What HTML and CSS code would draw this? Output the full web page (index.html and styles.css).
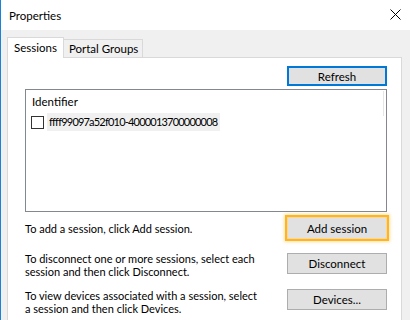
FILE: index.html
```html
<!DOCTYPE html>
<html lang="en">
<head>
  <meta charset="UTF-8" />
  <title>Properties</title>
  <link rel="stylesheet" href="styles.css">
</head>
<body>
  <div class="window">
    <div class="titlebar">
      <span class="title">Properties</span>
      <svg class="close" width="11" height="11" viewBox="0 0 11 11">
        <path d="M0.5 0.5 L10.5 10.5 M10.5 0.5 L0.5 10.5" stroke="#000" stroke-width="1" fill="none"/>
      </svg>
    </div>
    <div class="content">
      <div class="tabs">
        <div class="tab active">Sessions</div>
        <div class="tab">Portal Groups</div>
      </div>
      <div class="panel">
        <div class="toolbar">
          <button class="btn btn-default">Refresh</button>
        </div>
        <div class="listbox">
          <div class="list-head">Identifier</div>
          <div class="list-item">
            <span class="check"></span>
            <span class="item-text">ffff99097a52f010-4000013700000008</span>
          </div>
          <div class="scroll-hint"></div>
        </div>
        <div class="action-row first">
          <div class="action-text">To add a session, click Add session.</div>
          <button class="btn btn-focus">Add session</button>
        </div>
        <div class="action-row second">
          <div class="action-text">To disconnect one or more sessions, select each<br>session and then click Disconnect.</div>
          <button class="btn">Disconnect</button>
        </div>
        <div class="action-row third">
          <div class="action-text">To view devices associated with a session, select<br>a session and then click Devices.</div>
          <button class="btn">Devices...</button>
        </div>
      </div>
    </div>
  </div>
</body>
</html>
```

FILE: styles.css
```css
body {margin: 0; padding: 0; background: #fff; overflow: hidden; font-family: Lato, "Liberation Sans", sans-serif; font-size: 11px; color: #000;}
.window {height: 320px; border-left: 1px solid #1883d7; display: flex; flex-direction: column; box-sizing: border-box;}
.titlebar {height: 30px; background: #fff; display: flex; justify-content: space-between; align-items: center; padding: 0 9px 0 8px; flex-shrink: 0;}
.title {font-size: 11.5px;}
.close {margin-top: -1px;}
.content {flex: 1; background: #f0f0f0; padding: 7px 8px 0 6px; display: flex; flex-direction: column; min-height: 0;}
/* Tabs */
.tabs {display: flex; align-items: flex-end; height: 20px; flex-shrink: 0;}
.tab {box-sizing: border-box; height: 18px; line-height: 18px; padding: 0 4px 0 5px; border: 1px solid #d9d9d9; border-left: none; border-bottom: none; background: #f0f0f0; white-space: nowrap; font-size: 11.5px;}
.tab.active {height: 21px; line-height: 19px; margin-bottom: -1px; border-left: 1px solid #d9d9d9; background: #fff; position: relative; z-index: 1; padding: 0 6px;}
.panel {flex: 1; background: #fff; border: 1px solid #d9d9d9; border-bottom: none; padding: 8px 14px 0 17px; overflow: hidden;}
.toolbar {display: flex; justify-content: flex-end; margin-bottom: 3px;}
/* Buttons */
.btn {box-sizing: border-box; width: 100px; height: 21px; padding: 0; background: #e1e1e1; border: 1px solid #adadad; font-family: inherit; font-size: 11.5px; color: #000; flex-shrink: 0;}
.btn-default {height: 20px; border: 2px solid #0078d7;}
.btn-focus {height: 22px; border: 1px solid #f7d79a; box-shadow: 0 0 0 2px #ffb522, 0 0 3px 3px rgba(255, 190, 60, 0.45);}
/* List */
.listbox {box-sizing: border-box; height: 123px; border: 1px solid #828790; background: #fff; padding: 4px 5px 0 5px; position: relative;}
.list-head {line-height: 15px; padding-left: 1px; font-size: 11.5px;}
.list-item {display: flex; align-items: center; margin-top: 4px;}
.check {box-sizing: border-box; width: 13px; height: 13px; border: 1px solid #333; margin-right: 3px; flex-shrink: 0;}
.item-text {box-sizing: border-box; background: #f0f0f0; line-height: 18px; padding: 0 3px 0 2px; white-space: nowrap; font-size: 11px; letter-spacing: -0.8px;}
.scroll-hint {position: absolute; right: 2px; top: 1px; width: 1px; height: 25px; background: #e6e6e6;}
/* Rows */
.action-row {display: flex; justify-content: space-between; align-items: flex-start;}
.action-text {line-height: 13px; white-space: nowrap;}
.action-row.first {margin-top: 5px; align-items: center;}
.action-row.second {margin-top: 13px;}
.action-row.second .btn {margin-top: 1px;}
.action-row.third {margin-top: 11px;}
```
